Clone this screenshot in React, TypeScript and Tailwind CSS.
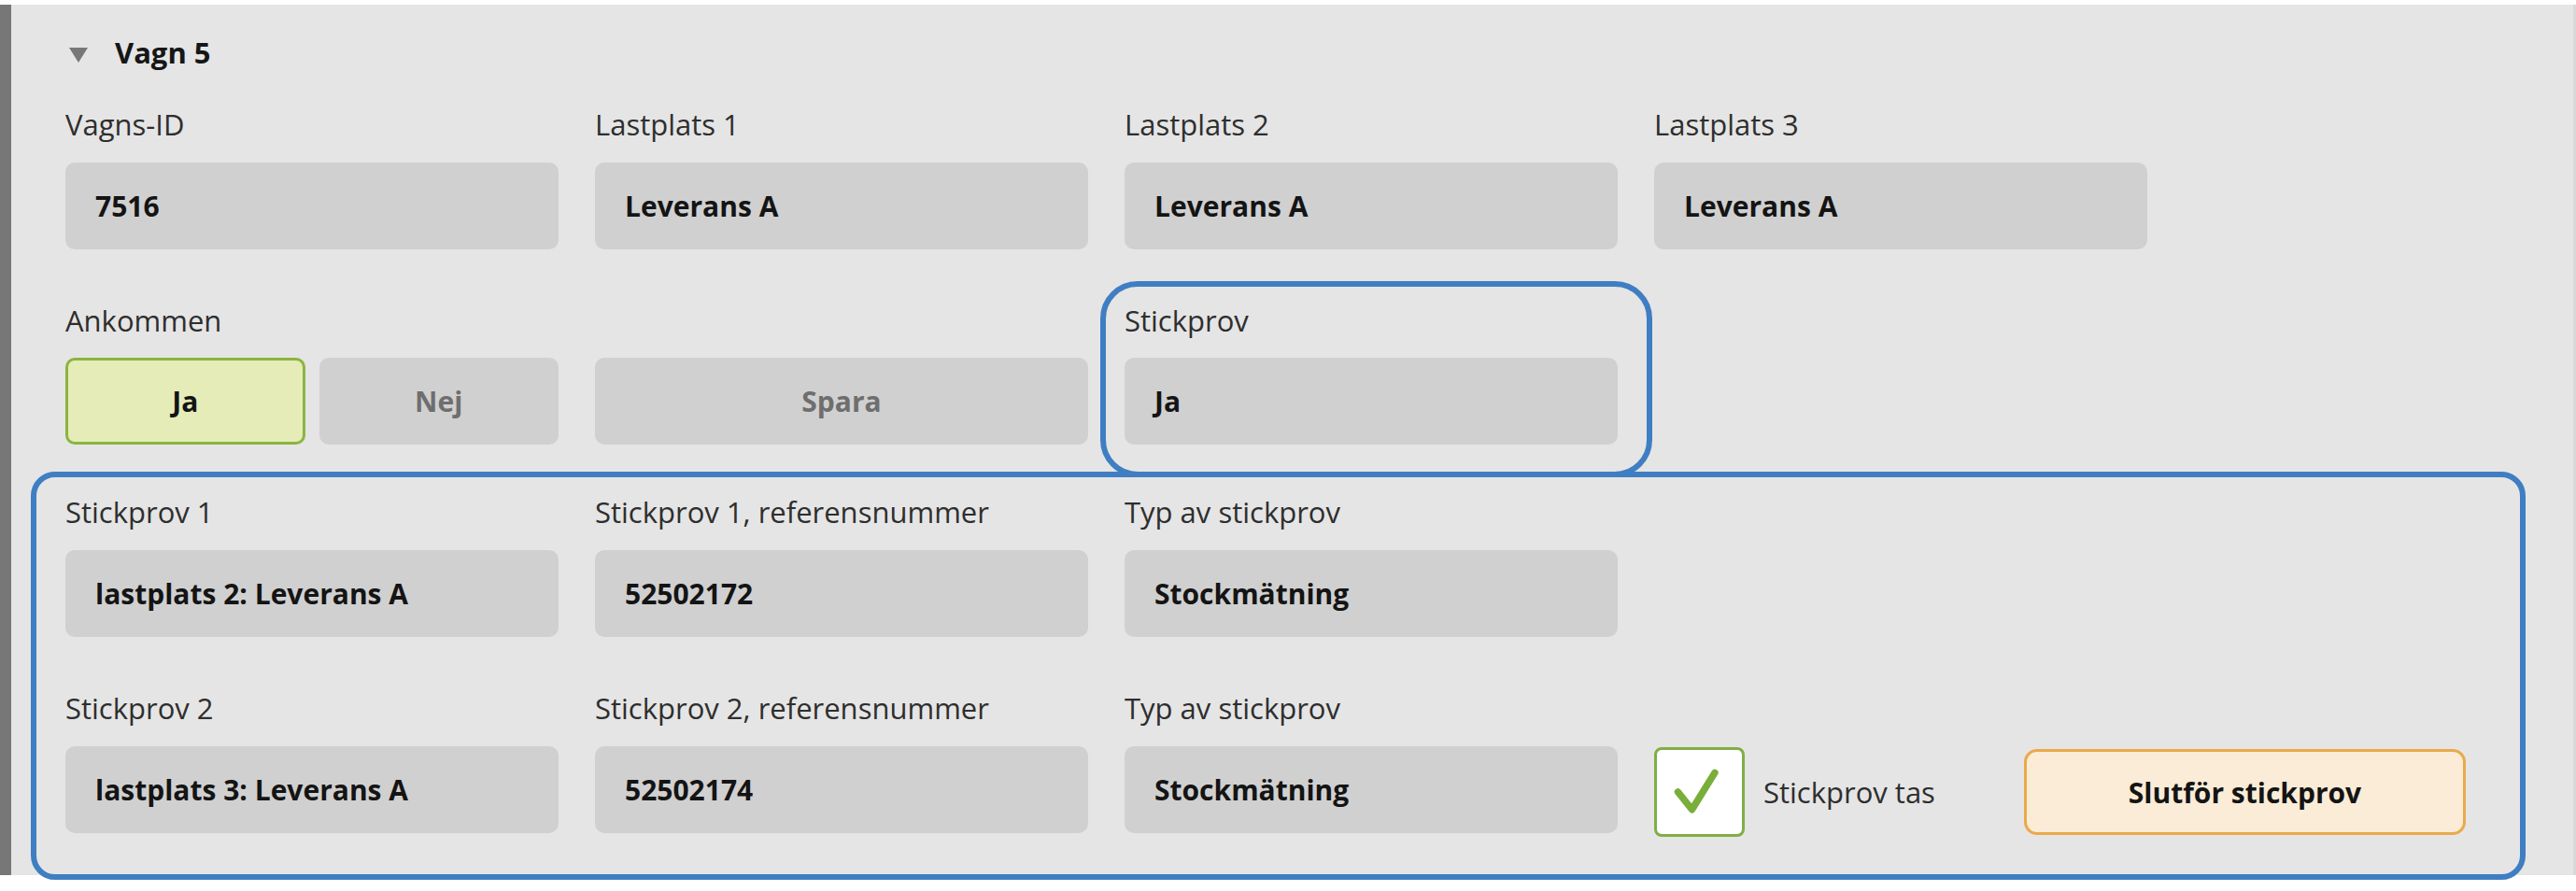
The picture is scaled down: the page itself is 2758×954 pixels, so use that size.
import React from 'react';

const fontStack = "font-['Open_Sans','Liberation_Sans',sans-serif]";

type FieldProps = { label: string; value: string };

function Field({ label, value }: FieldProps) {
  return (
    <div className="flex flex-col">
      <div className="h-[40px] text-[31px] leading-[40px] text-[#2e2e2e]">{label}</div>
      <div className="mt-[21px] flex h-[93px] items-center rounded-[10px] bg-[#d0d0d0] pl-[32px] text-[30px] font-bold text-[#141414]">
        {value}
      </div>
    </div>
  );
}

export default function App() {
  return (
    <div className={`h-[954px] w-[2758px] bg-white pt-[5px] ${fontStack}`}>
      <div className="flex h-[932px] bg-[#e5e5e5]">
        {/* vänster markering */}
        <div className="w-[12px] bg-[#777777]" />

        <div className="flex-1 pt-[31px]">
          {/* Rubrik */}
          <div className="flex h-[40px] items-center gap-[29px] pl-[62px]">
            <svg width="20" height="16" viewBox="0 0 20 16" className="mt-[5px]">
              <polygon points="0,0 20,0 10,16" fill="#777777" />
            </svg>
            <span className="text-[31px] font-bold leading-[40px] text-[#161616]">Vagn 5</span>
          </div>

          {/* Rad 1 */}
          <div className="mt-[37px] grid grid-cols-[repeat(4,528px)] gap-x-[39px] pl-[58px]">
            <Field label="Vagns-ID" value="7516" />
            <Field label="Lastplats 1" value="Leverans A" />
            <Field label="Lastplats 2" value="Leverans A" />
            <Field label="Lastplats 3" value="Leverans A" />
          </div>

          {/* Rad 2 */}
          <div className="mt-[56px] grid grid-cols-[repeat(4,528px)] items-start gap-x-[39px] pl-[58px]">
            <div className="flex flex-col">
              <div className="h-[40px] text-[31px] leading-[40px] text-[#2e2e2e]">Ankommen</div>
              <div className="mt-[20px] grid grid-cols-2 gap-[15px]">
                <button className="flex h-[93px] items-center justify-center rounded-[10px] border-[3px] border-[#8ab53f] bg-[#e5ecb8] text-[30px] font-bold text-[#141414]">
                  Ja
                </button>
                <button className="flex h-[93px] items-center justify-center rounded-[10px] bg-[#d0d0d0] text-[30px] font-bold text-[#6e6e6e]">
                  Nej
                </button>
              </div>
            </div>

            <div className="flex flex-col">
              <div className="h-[40px]" />
              <button className="mt-[20px] flex h-[93px] items-center justify-center rounded-[10px] bg-[#d0d0d0] text-[30px] font-bold text-[#6e6e6e]">
                Spara
              </button>
            </div>

            <div className="-ml-[26px] -mr-[37px] -mt-[22px] rounded-[40px] border-[6px] border-[#3f7ec2] pb-[29px] pl-[20px] pr-[31px] pt-[16px]">
              <div className="h-[40px] text-[31px] leading-[40px] text-[#2e2e2e]">Stickprov</div>
              <div className="mt-[20px] flex h-[93px] items-center rounded-[10px] bg-[#d0d0d0] pl-[32px] text-[30px] font-bold text-[#141414]">
                Ja
              </div>
            </div>
          </div>

          {/* Stickprov-sektion */}
          <div className="relative ml-[21px] mr-[51px] -mt-[6px] rounded-[26px] border-[6px] border-[#3f7ec2] pb-[40px] pl-[31px] pt-[17px]">
            <div className="grid grid-cols-[repeat(4,528px)] gap-x-[39px]">
              <Field label="Stickprov 1" value="lastplats 2: Leverans A" />
              <Field label="Stickprov 1, referensnummer" value="52502172" />
              <Field label="Typ av stickprov" value="Stockmätning" />
            </div>

            <div className="mt-[56px] grid grid-cols-[repeat(3,528px)_869px] items-start gap-x-[39px]">
              <Field label="Stickprov 2" value="lastplats 3: Leverans A" />
              <Field label="Stickprov 2, referensnummer" value="52502174" />
              <Field label="Typ av stickprov" value="Stockmätning" />
              <div className="flex flex-col">
                <div className="h-[40px]" />
                <div className="mt-[22px] flex items-center">
                  <div className="flex h-[96px] w-[97px] items-center justify-center rounded-[8px] border-[3px] border-[#80ae45] bg-white">
                    <svg width="97" height="96" viewBox="0 0 97 96">
                      <path
                        d="M24 48 L40 68 L66 26"
                        fill="none"
                        stroke="#7aae3a"
                        strokeWidth="8"
                        strokeLinecap="round"
                        strokeLinejoin="round"
                      />
                    </svg>
                  </div>
                  <span className="ml-[20px] text-[31px] leading-[40px] text-[#2e2e2e]">Stickprov tas</span>
                  <button className="ml-auto flex h-[92px] w-[473px] items-center justify-center rounded-[14px] border-[3px] border-[#eaa94a] bg-[#fbecd7] text-[30px] font-bold text-[#141414]">
                    Slutför stickprov
                  </button>
                </div>
              </div>
            </div>
          </div>
        </div>

        {/* höger kant */}
        <div className="w-[3px] bg-[#d8d8d8]" />
      </div>
    </div>
  );
}
